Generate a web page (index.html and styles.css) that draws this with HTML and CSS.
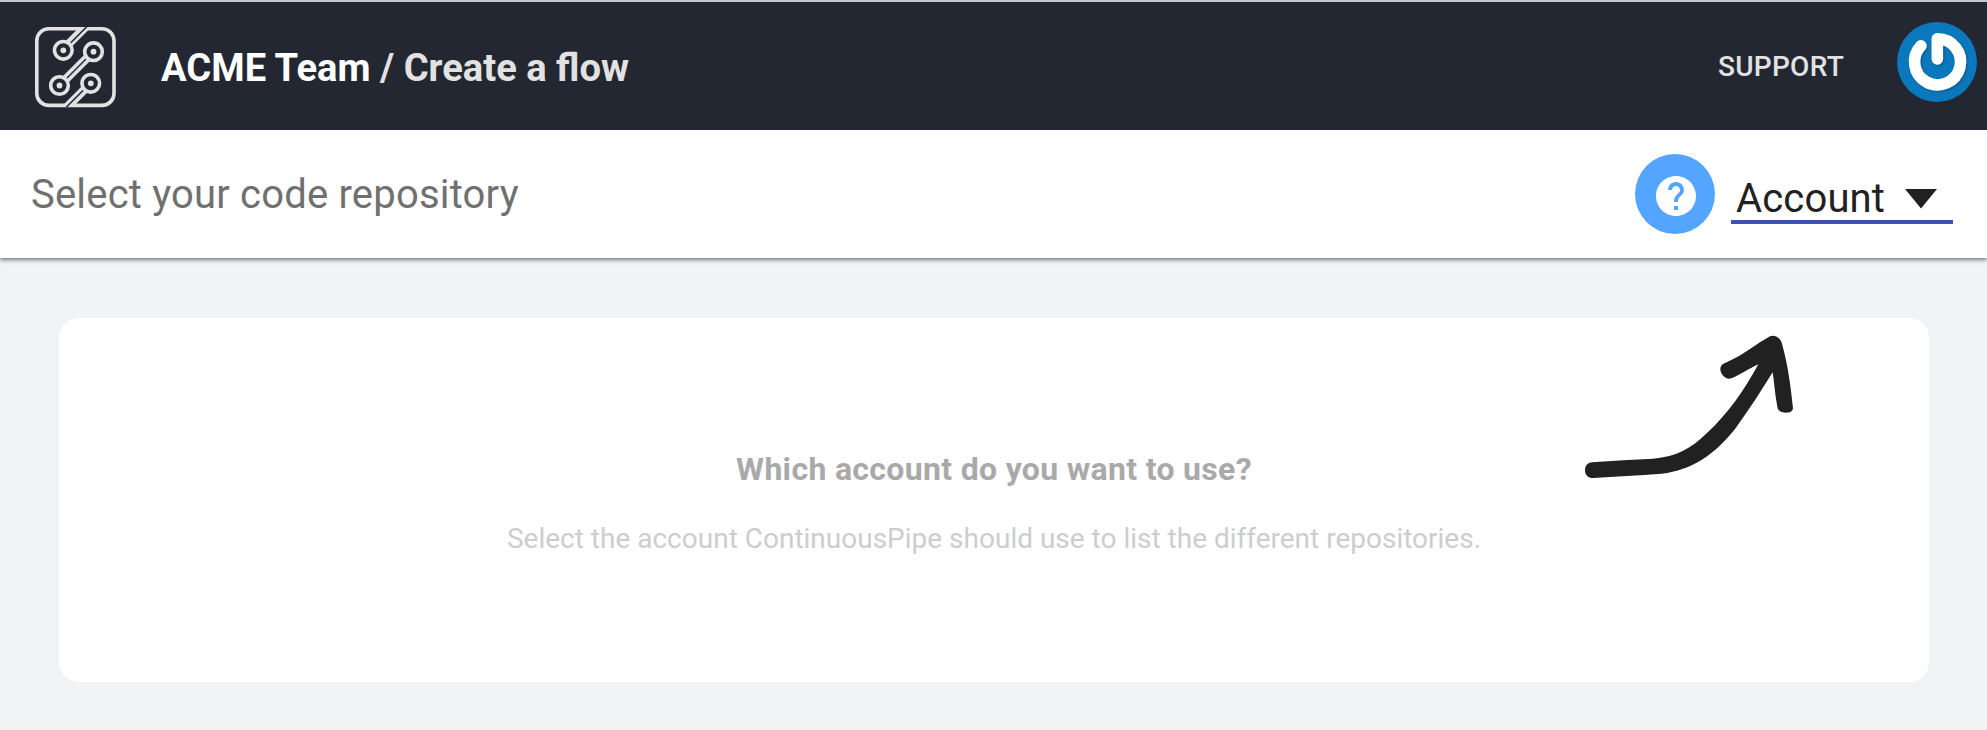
FILE: index.html
```html
<!DOCTYPE html>
<html lang="en">
<head>
<meta charset="utf-8">
<title>Create a flow</title>
<link rel="stylesheet" href="styles.css">
</head>
<body>
<header class="header">
  <svg class="logo" viewBox="0 0 120 110" width="120" height="110" fill="none">
    <defs><clipPath id="frame"><rect x="15" y="17" width="81" height="80"/></clipPath></defs>
    <rect x="16.800" y="18.800" width="77.200" height="76.600" rx="12" stroke="#e2e2e2" stroke-width="3.600"/>
    <g clip-path="url(#frame)">
      <g stroke="#e2e2e2" stroke-width="8.400">
        <path d="M44 38.500L70 12.500"/><path d="M40 75L74 41"/><path d="M71 73L43 101"/>
      </g>
      <g stroke="#232731" stroke-width="1.500">
        <path d="M44 39.500L70 13.500"/><path d="M40 75L74 41"/><path d="M71 72.500L43 100.500"/>
      </g>
    </g>
    <g fill="#232731" stroke="#e2e2e2" stroke-width="3.600">
      <circle cx="43.300" cy="40.300" r="8.800"/><circle cx="73.500" cy="41.700" r="8.800"/>
      <circle cx="39.500" cy="75.500" r="8.800"/><circle cx="70.800" cy="73.300" r="8.800"/>
    </g>
    <g fill="#e2e2e2">
      <circle cx="43.300" cy="40.300" r="2.900"/><circle cx="73.500" cy="41.700" r="2.900"/>
      <circle cx="39.500" cy="75.500" r="2.900"/><circle cx="70.800" cy="73.300" r="2.900"/>
    </g>
  </svg>
  <h1 class="title">ACME Team <span class="crumb">/ Create a flow</span></h1>
  <a class="support">SUPPORT</a>
  <svg class="avatar" viewBox="0 0 80 80" width="80" height="80">
    <defs><filter id="soft" x="-20%" y="-20%" width="140%" height="140%"><feDropShadow dx="1" dy="1" stdDeviation="1.200" flood-color="#00304f" flood-opacity=".5"/></filter></defs>
    <circle cx="40" cy="40" r="40" fill="#0a78bc"/>
    <path d="M24 23.800A23 23 0 1 0 40.300 16.800V37" fill="none" stroke="#fff" stroke-width="11.500" stroke-linecap="round" stroke-linejoin="round" filter="url(#soft)"/>
  </svg>
</header>
<div class="toolbar">
  <h2 class="prompt">Select your code repository</h2>
  <button class="help" aria-label="Help">
    <svg viewBox="0 0 24 24" width="48" height="48"><path fill="#fff" d="M12 2C6.480 2 2 6.480 2 12s4.480 10 10 10 10-4.480 10-10S17.520 2 12 2zm1 17h-2v-2h2v2zm2.070-7.750l-.9.920C13.450 12.900 13 13.500 13 15h-2v-.5c0-1.100.45-2.100 1.170-2.830l1.240-1.260c.37-.36.59-.86.59-1.410 0-1.100-.9-2-2-2s-2 .9-2 2H8c0-2.210 1.790-4 4-4s4 1.790 4 4c0 .88-.36 1.680-.93 2.250z"/></svg>
  </button>
  <div class="select">
    <span>Account</span>
    <svg viewBox="0 0 32 20" width="32" height="20"><path d="M0 0H32L16 19.500Z" fill="#212121"/></svg>
  </div>
</div>
<main class="content">
  <section class="card">
    <h3 class="question">Which account do you want to use?</h3>
    <p class="hint">Select the account ContinuousPipe should use to list the different repositories.</p>
    <svg class="arrow" viewBox="0 0 780 570" width="260" height="190" fill="#212121">
      <path d="M96 457C160 452 220 449 280 446C350 440 395 415 440 370C505 310 550 245 595 163C565 177 540 195 514 205C497 211 480 193 481 175C482 166 490 161 500 157C550 135 590 101 630 79C645 73 662 84 666 101C685 170 692 230 699 294C698 305 690 308 676 308C663 308 654 302 652 290C645 255 643 220 638 187C605 240 570 295 530 350C465 435 395 480 305 491C235 497 165 499 100 504C84 504 76 495 75 482C75 467 83 458 96 457Z"/>
    </svg>
  </section>
</main>
</body>
</html>
```
FILE: styles.css
```css
* { box-sizing: border-box; }
body {
  margin: 0;
  height: 730px;
  overflow: hidden;
  background: #f2f3f5;
  font-family: Roboto, "Liberation Sans", sans-serif;
}
h1, h2, h3, p { margin: 0; }
.header {
  position: relative;
  z-index: 1;
  display: flex;
  align-items: center;
  height: 130px;
  padding: 0 10px 0 20px;
  border-top: 2px solid #c3c7ca;
  background: #232731;
}
.logo { flex: none; margin-top: -2px; }
.title {
  flex: 1;
  padding: 3px 0 0 21px;
  color: #fff;
  font-size: 38.150px;
  font-weight: 700;
  line-height: 48px;
}
.crumb { color: #e2e2e2; }
.support {
  margin-right: 53px;
  padding-top: 2px;
  color: #e2e2e2;
  font-size: 28px;
  font-weight: 500;
  letter-spacing: .28px;
  line-height: 40px;
}
.avatar { flex: none; margin-top: -8px; }
.toolbar {
  position: relative;
  display: flex;
  align-items: center;
  height: 128px;
  padding: 0 34px 0 31px;
  background: #fff;
  box-shadow: 0 2px 4px rgba(0, 0, 0, .5);
}
.prompt {
  flex: 1;
  padding-top: 2px;
  color: #707070;
  font-size: 40px;
  font-weight: 400;
  letter-spacing: .19px;
  line-height: 48px;
}
.help {
  display: flex;
  width: 80px;
  height: 80px;
  margin-right: 16px;
  padding: 18px 15px 14px 17px;
  border: 0;
  border-radius: 50%;
  background: #54a5ff;
}
.select {
  display: flex;
  align-items: center;
  justify-content: space-between;
  width: 222px;
  height: 54px;
  margin-top: 6px;
  padding: 8px 16px 0 5px;
  border-bottom: 4px solid #3f51b5;
  color: #212121;
  font-size: 40px;
  letter-spacing: .15px;
  line-height: 48px;
}
.content { padding: 60px 58px 0 59px; }
.card {
  position: relative;
  height: 364px;
  padding-top: 130px;
  border-radius: 20px;
  background: #fff;
  text-align: center;
}
.question {
  padding-top: 1px;
  color: #a9a9a9;
  font-size: 32px;
  font-weight: 700;
  letter-spacing: .32px;
  line-height: 40px;
}
.hint {
  margin-top: 32px;
  color: #cdcdcd;
  font-size: 28px;
  line-height: 36px;
}
.arrow {
  position: absolute;
  top: -8px;
  left: 1501px;
}
```
